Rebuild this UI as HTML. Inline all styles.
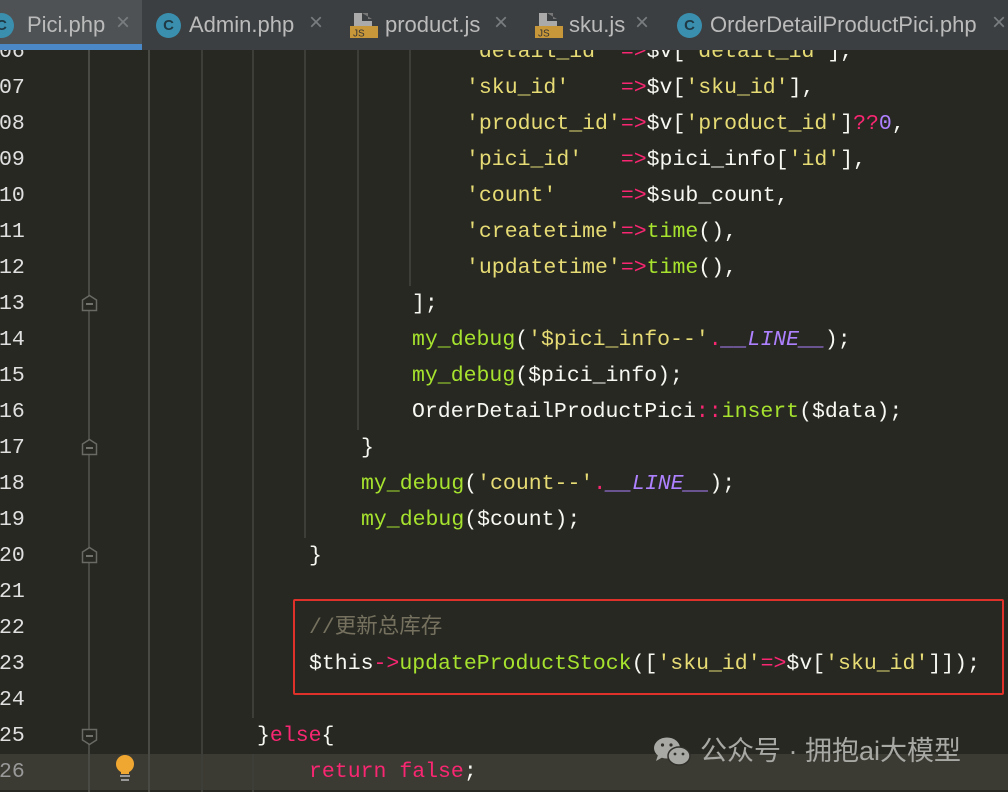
<!DOCTYPE html>
<html><head><meta charset="utf-8"><style>
*{margin:0;padding:0;box-sizing:border-box}
body{width:1008px;height:792px;overflow:hidden;background:#272822;position:relative;font-family:"Liberation Mono",monospace}
.tabs{position:absolute;left:0;top:0;width:1008px;height:50px;background:#3c3f41;font-family:"Liberation Sans",sans-serif;font-size:22px;color:#bbbbbb}
.tab{position:absolute;top:0;height:50px;line-height:50px;white-space:nowrap}
.ic{position:absolute;top:13px;width:25px;height:25px;border-radius:50%;background:#3a8fae;color:#1f3a44;font-size:15px;line-height:25px;text-align:center;font-weight:bold}
.js{position:absolute;top:12px;width:28px;height:26px}
.x{position:absolute;color:#7a7d80;font-size:24px}
.ln{position:absolute;left:-1px;height:36px;line-height:36px;font-size:21.5px;color:#e0e0e0}
.l{position:absolute;height:36px;line-height:36px;font-size:21.5px;color:#f8f8f2;white-space:pre}
.s{color:#e6db74}.p{color:#f92672}.g{color:#a6e22e}.c{color:#ae81ff;font-style:italic}.n{color:#ae81ff}.cm{color:#75715e;font-family:"Liberation Mono","Noto Sans CJK SC",monospace}
.v{position:absolute;width:2px;background:#3e3e38}
.fold{position:absolute;left:81px;width:17px;height:18px}
</style></head><body>
<div style="position:absolute;left:0;top:754px;width:1008px;height:36px;background:#3c3b33"></div>
<div class="v" style="left:88px;top:50px;height:742px;background:#4a4a45"></div>
<div class="v" style="left:148px;top:50px;height:742px;background:#4a4a45"></div>
<div class="v" style="left:201px;top:50px;height:742px"></div>
<div class="v" style="left:252px;top:50px;height:668px"></div>
<div class="v" style="left:252px;top:754px;height:38px"></div>
<div class="v" style="left:304px;top:50px;height:488px"></div>
<div class="v" style="left:357px;top:50px;height:380px"></div>
<div class="v" style="left:409px;top:50px;height:236px"></div>

<svg class="fold" style="top:294px" viewBox="0 0 17 18"><path d="M1.5 16.5V6L8.5 1.5L15.5 6V16.5Z" fill="#272822" stroke="#6a6a65" stroke-width="1.5"/><path d="M5 10h7" stroke="#8a8a85" stroke-width="1.5"/></svg>
<svg class="fold" style="top:438px" viewBox="0 0 17 18"><path d="M1.5 16.5V6L8.5 1.5L15.5 6V16.5Z" fill="#272822" stroke="#6a6a65" stroke-width="1.5"/><path d="M5 10h7" stroke="#8a8a85" stroke-width="1.5"/></svg>
<svg class="fold" style="top:546px" viewBox="0 0 17 18"><path d="M1.5 16.5V6L8.5 1.5L15.5 6V16.5Z" fill="#272822" stroke="#6a6a65" stroke-width="1.5"/><path d="M5 10h7" stroke="#8a8a85" stroke-width="1.5"/></svg>
<svg class="fold" style="top:728px" viewBox="0 0 17 18"><path d="M1.5 1.5V12L8.5 16.5L15.5 12V1.5Z" fill="#272822" stroke="#6a6a65" stroke-width="1.5"/><path d="M5 8h7" stroke="#8a8a85" stroke-width="1.5"/></svg>
<svg style="position:absolute;left:114px;top:755px" width="22" height="28" viewBox="0 0 22 28"><circle cx="11" cy="9" r="9" fill="#f0a732"/><path d="M7 14h8v5H7z" fill="#f0a732"/><rect x="6" y="20" width="10" height="2" fill="#999"/><rect x="7" y="24" width="8" height="2" fill="#999"/></svg>

<div class="ln" style="top:34px">06</div>
<div class="ln" style="top:70px">07</div>
<div class="ln" style="top:106px">08</div>
<div class="ln" style="top:142px">09</div>
<div class="ln" style="top:178px">10</div>
<div class="ln" style="top:214px">11</div>
<div class="ln" style="top:250px">12</div>
<div class="ln" style="top:286px">13</div>
<div class="ln" style="top:322px">14</div>
<div class="ln" style="top:358px">15</div>
<div class="ln" style="top:394px">16</div>
<div class="ln" style="top:430px">17</div>
<div class="ln" style="top:466px">18</div>
<div class="ln" style="top:502px">19</div>
<div class="ln" style="top:538px">20</div>
<div class="ln" style="top:574px">21</div>
<div class="ln" style="top:610px">22</div>
<div class="ln" style="top:646px">23</div>
<div class="ln" style="top:682px">24</div>
<div class="ln" style="top:718px">25</div>
<div class="ln" style="top:754px;color:#999">26</div>

<div class="l" style="left:466px;top:34px"><span class="s">'detail_id'</span> <span class="p">=&gt;</span>$v[<span class="s">'detail_id'</span>],</div>
<div class="l" style="left:466px;top:70px"><span class="s">'sku_id'</span>    <span class="p">=&gt;</span>$v[<span class="s">'sku_id'</span>],</div>
<div class="l" style="left:466px;top:106px"><span class="s">'product_id'</span><span class="p">=&gt;</span>$v[<span class="s">'product_id'</span>]<span class="p">??</span><span class="n">0</span>,</div>
<div class="l" style="left:466px;top:142px"><span class="s">'pici_id'</span>   <span class="p">=&gt;</span>$pici_info[<span class="s">'id'</span>],</div>
<div class="l" style="left:466px;top:178px"><span class="s">'count'</span>     <span class="p">=&gt;</span>$sub_count,</div>
<div class="l" style="left:466px;top:214px"><span class="s">'createtime'</span><span class="p">=&gt;</span><span class="g">time</span>(),</div>
<div class="l" style="left:466px;top:250px"><span class="s">'updatetime'</span><span class="p">=&gt;</span><span class="g">time</span>(),</div>
<div class="l" style="left:412px;top:286px">];</div>
<div class="l" style="left:412px;top:322px"><span class="g">my_debug</span>(<span class="s">'$pici_info--'</span><span class="p">.</span><span class="c">__LINE__</span>);</div>
<div class="l" style="left:412px;top:358px"><span class="g">my_debug</span>($pici_info);</div>
<div class="l" style="left:412px;top:394px">OrderDetailProductPici<span class="p">::</span><span class="g">insert</span>($data);</div>
<div class="l" style="left:361px;top:430px">}</div>
<div class="l" style="left:361px;top:466px"><span class="g">my_debug</span>(<span class="s">'count--'</span><span class="p">.</span><span class="c">__LINE__</span>);</div>
<div class="l" style="left:361px;top:502px"><span class="g">my_debug</span>($count);</div>
<div class="l" style="left:309px;top:538px">}</div>
<div class="l cm" style="left:309px;top:610px">//更新总库存</div>
<div class="l" style="left:309px;top:646px">$this<span class="p">-&gt;</span><span class="g">updateProductStock</span>([<span class="s">'sku_id'</span><span class="p">=&gt;</span>$v[<span class="s">'sku_id'</span>]]);</div>
<div class="l" style="left:257px;top:718px">}<span class="p">else</span>{</div>
<div class="l" style="left:309px;top:754px"><span class="p">return false</span>;</div>

<div style="position:absolute;left:293px;top:599px;width:711px;height:96px;border:2px solid #e0302a;border-radius:2px"></div>

<svg style="position:absolute;left:653px;top:737px" width="40" height="30" viewBox="0 0 40 30"><ellipse cx="14" cy="11" rx="13" ry="10.5" fill="#a8a8a5"/><path d="M5 18l-2 6 7-4z" fill="#a8a8a5"/><ellipse cx="26" cy="19" rx="11" ry="9" fill="#a8a8a5" stroke="#302f29" stroke-width="1.5"/><circle cx="9.5" cy="8" r="1.6" fill="#302f29"/><circle cx="18" cy="8" r="1.6" fill="#302f29"/><circle cx="22" cy="17" r="1.4" fill="#302f29"/><circle cx="30" cy="17" r="1.4" fill="#302f29"/></svg>
<div style="position:absolute;left:700px;top:734px;font-family:'Liberation Sans','Noto Sans CJK SC',sans-serif;font-size:27px;color:#a8a8a5;white-space:nowrap;line-height:34px">公众号 · 拥抱ai大模型</div>

<div class="tabs">
 <div class="tab" style="left:0;width:142px;background:#4e5254;border-bottom:6px solid #4a88c7;height:50px"></div>
 <div class="ic" style="left:-11px">C</div>
 <div class="tab" style="left:27px">Pici.php</div>
 <div class="x" style="left:116px;top:9px">×</div>
 <div class="ic" style="left:156px">C</div>
 <div class="tab" style="left:189px">Admin.php</div>
 <div class="x" style="left:309px;top:9px">×</div>
 <svg class="js" style="left:350px" viewBox="0 0 28 26"><path d="M4 1h8v8h10v5H4z" fill="#aaaaaa"/><path d="M12 1l6 0 0 6 4 0z" fill="#777"/><rect x="0" y="14" width="28" height="12" fill="#c8973a"/><text x="3" y="24.5" font-size="10" font-family="Liberation Sans" fill="#333">JS</text></svg>
 <div class="tab" style="left:385px">product.js</div>
 <div class="x" style="left:494px;top:9px">×</div>
 <svg class="js" style="left:535px" viewBox="0 0 28 26"><path d="M4 1h8v8h10v5H4z" fill="#aaaaaa"/><path d="M12 1l6 0 0 6 4 0z" fill="#777"/><rect x="0" y="14" width="28" height="12" fill="#c8973a"/><text x="3" y="24.5" font-size="10" font-family="Liberation Sans" fill="#333">JS</text></svg>
 <div class="tab" style="left:569px">sku.js</div>
 <div class="x" style="left:635px;top:9px">×</div>
 <div class="ic" style="left:677px">C</div>
 <div class="tab" style="left:710px">OrderDetailProductPici.php</div>
 <div class="x" style="left:992px;top:9px">×</div>
</div>
</body></html>
